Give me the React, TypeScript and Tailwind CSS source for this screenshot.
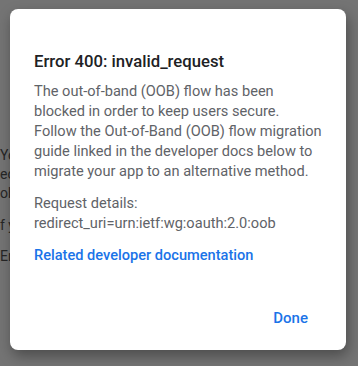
const BG_LINES = [
  { text: 'You', top: 'mt-[146px]' },
  { text: 'ec', top: 'mt-[0px]' },
  { text: 'ob', top: 'mt-[0px]' },
  { text: 'f y', top: 'mt-[13px]' },
  { text: 'Err', top: 'mt-[12px]' },
]

const BODY = [
  'The out-of-band (OOB) flow has been',
  'blocked in order to keep users secure.',
  'Follow the Out-of-Band (OOB) flow migration',
  'guide linked in the developer docs below to',
  'migrate your app to an alternative method.',
]

export default function App() {
  return (
    <div className="relative w-[358px] h-[366px] overflow-hidden bg-[#747474] font-['Roboto','Liberation_Sans',sans-serif]">
      {/* page behind the scrim, only its left edge shows */}
      <div className="w-[10px] overflow-hidden flex flex-col text-[14px] leading-[19px] text-[#262626] whitespace-nowrap">
        {BG_LINES.map((l, i) => (
          <p key={i} className={l.top}>{l.text}</p>
        ))}
      </div>

      <div className="absolute left-[10px] top-[9px] w-[336px] h-[341px] rounded-[8px] bg-white shadow-[2px_6px_14px_rgba(0,0,0,0.35)] flex flex-col px-6 pt-[41px] pb-[22px]">
        <h1 className="text-[16.7px] leading-6 font-medium text-[#202124]">Error 400: invalid_request</h1>
        <p className="mt-[7px] text-[14.6px] leading-5 text-[#5f6368] whitespace-nowrap">
          {BODY.map((line, i) => (
            <span key={i} className="block">{line}</span>
          ))}
        </p>
        <p className="mt-3 text-[14.6px] leading-5 text-[#5f6368] whitespace-nowrap">
          <span className="block">Request details:</span>
          <span className="block">redirect_uri=urn:ietf:wg:oauth:2.0:oob</span>
        </p>
        <a className="mt-3 text-[14.6px] leading-5 font-medium text-[#1a73e8]">Related developer documentation</a>
        <div className="mt-auto flex justify-end pr-[14px]">
          <button className="text-[15px] leading-5 font-medium text-[#1a73e8]">Done</button>
        </div>
      </div>
    </div>
  )
}
